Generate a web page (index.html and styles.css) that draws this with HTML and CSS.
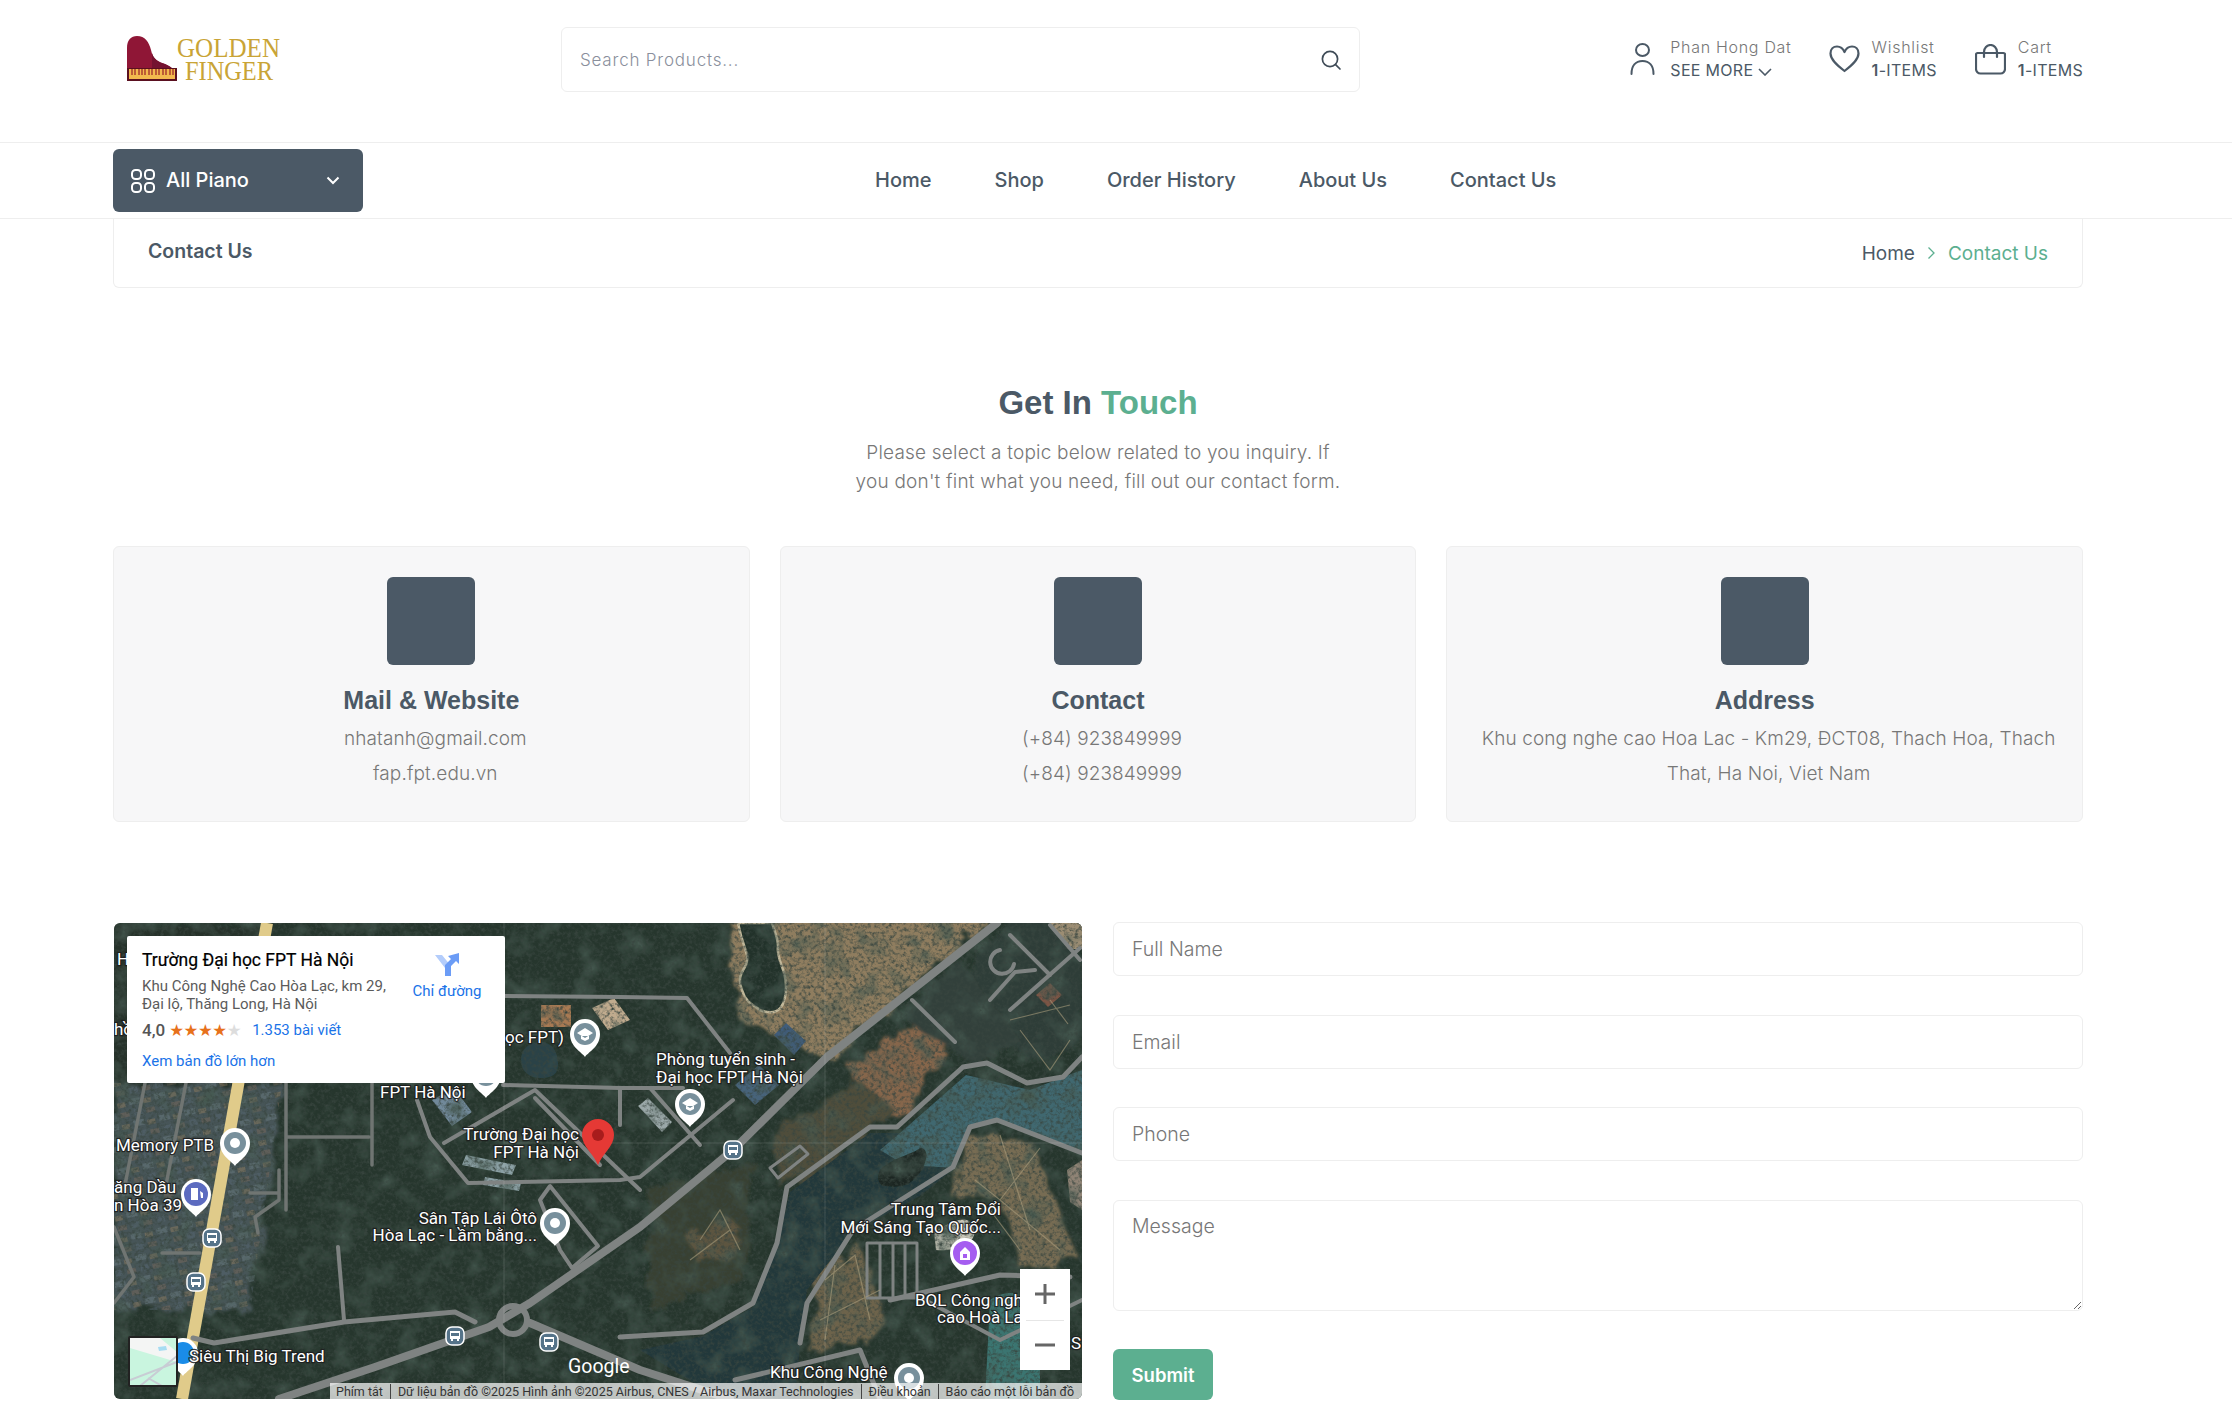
FILE: index.html
```html
<!DOCTYPE html>
<html>
  <head>
    <title>Contact Us</title>
    <link rel="stylesheet" href="styles.css">
  </head>
  <body>
    <header class="top-header">
      <div class="wrap top-row">
        <a class="logo" href="#">
          <svg width="190" height="58" viewBox="0 -8 190 58">
            <path d="M0 45V12C0 4 4 0 10 0c8 0 12 6 14 14 2 10 8 12 14 14 7 3 12 7 12 17z" fill="#8f1636"/>
            <path d="M25 17c2 7 7 9 13 11 7 3 12 7 12 17H25z" fill="#741230"/>
            <rect x="0" y="32" width="50" height="13" fill="#5a1020"/>
            <rect x="2" y="33" width="46" height="10" fill="#f3b94e"/>
            <path d="M5 33v6M8 33v6M12 33v6M15 33v6M18 33v6M22 33v6M25 33v6M29 33v6M32 33v6M36 33v6M39 33v6M43 33v6M46 33v6" stroke="#a5352c" stroke-width="1.4"/>
            <rect x="0" y="43" width="50" height="2" fill="#5a1020"/>
            <text class="logo-text" x="50" y="21" textLength="103" lengthAdjust="spacingAndGlyphs">GOLDEN</text>
            <text class="logo-text" x="58" y="44" textLength="88" lengthAdjust="spacingAndGlyphs">FINGER</text>
          </svg>
        </a>
        <form class="search-box">
          <input type="text" placeholder="Search Products...">
          <svg width="22" height="22" viewBox="0 0 22 22" fill="none" stroke="#3f4b57" stroke-width="1.7">
            <circle cx="10" cy="10" r="7.6"/>
            <path d="M15.6 15.6l4.4 4.4" stroke-linecap="round"/>
          </svg>
        </form>
        <div class="actions">
          <a class="action action-user" href="#">
            <svg width="25" height="32" viewBox="0 0 25 32" fill="none" stroke="#4b5966" stroke-width="2">
              <ellipse cx="12.5" cy="7" rx="6.500" ry="6"/>
              <path d="M1.500 31c0-8 4-13 11-13s11 5 11 13" stroke-linecap="round"/>
            </svg>
            <span class="action-text">
              <span class="action-label">Phan Hong Dat</span>
              <span class="action-value">SEE MORE
                <svg width="14" height="8" viewBox="0 0 14 8" fill="none" stroke="#4b5966" stroke-width="1.6"><path d="M1 1l6 6 6-6"/></svg>
              </span>
            </span>
          </a>
          <a class="action action-wish" href="#">
            <svg width="31" height="28" viewBox="0 0 31 28" fill="none" stroke="#4b5966" stroke-width="2.2">
              <path d="M15.500 26C9 21 1.500 15 1.500 8.500 1.500 4 4.500 1.500 8 1.500c3.500 0 6 2 7.500 5.500C17 3.500 19.500 1.500 23 1.500c3.500 0 6.500 2.500 6.500 7C29.500 15 22 21 15.500 26z" stroke-linejoin="round"/>
            </svg>
            <span class="action-text">
              <span class="action-label">Wishlist</span>
              <span class="action-value"><b>1</b>-ITEMS</span>
            </span>
          </a>
          <a class="action action-cart" href="#">
            <svg width="31" height="31" viewBox="0 0 31 31" fill="none" stroke="#4b5966" stroke-width="2.200">
              <path d="M2.500 9h26a1.500 1.500 0 0 1 1.500 1.500V25a4.500 4.500 0 0 1-4.500 4.500h-20A4.500 4.500 0 0 1 1 25V10.500A1.500 1.500 0 0 1 2.500 9z"/>
              <path d="M9 13V8c0-4 3-7 6.500-7S22 4 22 8v5" stroke-linecap="round"/>
            </svg>
            <span class="action-text">
              <span class="action-label">Cart</span>
              <span class="action-value"><b>1</b>-ITEMS</span>
            </span>
          </a>
        </div>
      </div>
    </header>

    <nav class="nav-bar">
      <div class="wrap nav-row">
        <button type="button" class="category-btn">
          <svg width="24" height="24" viewBox="0 0 24 24" fill="none" stroke="#fff" stroke-width="2">
            <rect x="1" y="1" width="9" height="9" rx="3.500"/>
            <rect x="14" y="1" width="9" height="9" rx="3.500"/>
            <rect x="1" y="14" width="9" height="9" rx="3.500"/>
            <rect x="14" y="14" width="9" height="9" rx="3.500"/>
          </svg>
          <span class="category-name">All Piano</span>
          <svg class="category-caret" width="14" height="9" viewBox="0 0 14 9" fill="none" stroke="#fff" stroke-width="2"><path d="M1.500 1.500L7 7l5.500-5.500"/></svg>
        </button>
        <ul class="nav-links">
          <li><a href="#">Home</a></li>
          <li><a href="#">Shop</a></li>
          <li><a href="#">Order History</a></li>
          <li><a href="#">About Us</a></li>
          <li><a href="#">Contact Us</a></li>
        </ul>
      </div>
    </nav>

    <main class="wrap">
      <div class="breadcrumb">
        <h2>Contact Us</h2>
        <div class="crumbs">
          <a href="#">Home</a>
          <svg width="9" height="14" viewBox="0 0 9 14" fill="none" stroke="#5caf90" stroke-width="1.300"><path d="M1.500 1.500L7 7l-5.500 5.500"/></svg>
          <span>Contact Us</span>
        </div>
      </div>

      <section class="intro">
        <h1>Get In <span>Touch</span></h1>
        <p>Please select a topic below related to you inquiry. If<br>you don't fint what you need, fill out our contact form.</p>
      </section>

      <section class="cards">
        <div class="card">
          <div class="card-icon"></div>
          <h3>Mail &amp; Website</h3>
          <p>nhatanh@gmail.com</p>
          <p>fap.fpt.edu.vn</p>
        </div>
        <div class="card">
          <div class="card-icon"></div>
          <h3>Contact</h3>
          <p>(+84) 923849999</p>
          <p>(+84) 923849999</p>
        </div>
        <div class="card">
          <div class="card-icon"></div>
          <h3>Address</h3>
          <p>Khu cong nghe cao Hoa Lac - Km29, ĐCT08, Thach Hoa, Thach That, Ha Noi, Viet Nam</p>
        </div>
      </section>

      <section class="contact-row">
        <div class="map">
          <svg class="map-canvas" width="968" height="476" viewBox="114 923 968 476">
            <defs>
              <filter id="grain" x="0" y="0" width="100%" height="100%">
                <feTurbulence type="fractalNoise" baseFrequency="0.28" numOctaves="3" seed="7"/>
                <feColorMatrix values="0 0 0 0 0.04  0 0 0 0 0.06  0 0 0 0 0.05  2.2 0 0 0 -0.95"/>
              </filter>
              <filter id="blotch" x="0" y="0" width="100%" height="100%">
                <feTurbulence type="fractalNoise" baseFrequency="0.045" numOctaves="4" seed="21"/>
                <feColorMatrix values="0 0 0 0 0.06  0 0 0 0 0.10  0 0 0 0 0.08  2.4 0 0 0 -1.15"/>
              </filter>
              <filter id="rough" x="-5%" y="-5%" width="110%" height="110%">
                <feTurbulence type="fractalNoise" baseFrequency="0.05" numOctaves="3" seed="4" result="n"/>
                <feDisplacementMap in="SourceGraphic" in2="n" scale="22"/>
                <feGaussianBlur stdDeviation="1.6"/>
              </filter>
              <filter id="soft"><feGaussianBlur stdDeviation="0.5"/></filter>
              <pattern id="houses" width="26" height="22" patternUnits="userSpaceOnUse" patternTransform="rotate(-12)">
                <rect x="1" y="2" width="11" height="6" fill="#6a7a80"/>
                <rect x="15" y="4" width="8" height="5" fill="#8d7a5e"/>
                <rect x="4" y="13" width="8" height="6" fill="#556570"/>
                <rect x="16" y="14" width="9" height="5" fill="#77685a"/>
              </pattern>
              <g id="pin">
                <path d="M0 23C-3 18-15 13-15 0a15 15 0 0 1 30 0C15 13 3 18 0 23z" fill="#fff"/>
              </g>
              <g id="bus">
                <rect x="-9" y="-9" width="18" height="18" rx="6" fill="#557389" stroke="#fff" stroke-width="1.500"/>
                <path d="M-5-5h10v8h-10z" fill="#fff"/>
                <path d="M-4-3h8v3h-8z" fill="#557389"/>
                <path d="M-4 3h2v2h-2zM2 3h2v2h-2z" fill="#fff"/>
              </g>
            </defs>

            <rect x="114" y="923" width="968" height="476" fill="#26362d"/>

            <!-- ground colours -->
            <g filter="url(#rough)">
              <path d="M114 1083H282L250 1310H114z" fill="#465458"/>
              <path d="M630 915H990L830 1060 740 1020 733 965 730 915z" fill="#8f7d5e"/>
              <path d="M850 1068L913 1023 953 1043 897 1117 867 1107z" fill="#86664c"/>
              <path d="M770 1130L860 1080 895 1110 830 1165 780 1190z" fill="#4f4d3b"/>
              <path d="M970 1133L1033 1143 1077 1257 1020 1270 1000 1193 953 1200z" fill="#776c52"/>
              <path d="M817 1270L860 1243 890 1327 812 1357z" fill="#6d644c"/>
              <path d="M650 1190L755 1160 745 1280 650 1310z" fill="#384132"/>
              <path d="M690 1240c20-20 40-30 50-10 6 20-30 40-46 30z" fill="#5d5540"/>
              <path d="M1082 915H1010L950 990 1030 1060 1082 1040z" fill="#2f3c38"/>
              <path d="M900 1015L960 960 1020 1040 975 1065z" fill="#33403a"/>
              <path d="M114 925H260V1083H114z" fill="#25332c"/>
            </g>
            <path d="M114 1083H282L250 1310H114z" fill="url(#houses)" opacity=".5"/>

            <!-- water -->
            <g filter="url(#soft)">
              <path d="M966 1075L1030 1090 1082 1070V1150L997 1122 970 1128 955 1168 920 1196 853 1232 807 1290 800 1345 795 1399H720L640 1350 703 1336 753 1307 777 1247 790 1192 870 1133 900 1133z" fill="#24373a"/>
              <path d="M966 1075L1030 1090 1082 1070V1150L997 1122 970 1128 955 1168 905 1165 880 1150 900 1133z" fill="#3f686f"/>
              <path d="M880 1170c15-14 30-14 40-22 12 0 5 22-5 30-10 12-24 8-32 8-6-4-6-10-3-16z" fill="#1a2822"/>
              <path d="M738 923c6 30 12 30 8 42-6 10-8 14-4 25 4 14 14 16 18 20 20 8 26-6 26-24 0-18-10-26-8-40 0-8-4-16-6-23z" fill="#22322a" stroke="#c2b89a" stroke-width="2.500"/>
              <path d="M990 1300c10-8 30-10 30-2l20 40v61H985z" fill="#3b7471"/>
              <path d="M521 1060c0-14 12-18 20-18s16 6 17 20-8 16-18 16-19-6-19-18z" fill="#2a4346"/>
              <path d="M432 1100l22-12 18 24-20 14z" fill="#71899a"/>
              <path d="M774 1035l12-12 20 18-12 14z" fill="#3f5c7a"/>
              <path d="M735 1085l24-20 20 20-24 20z" fill="#47637a"/>

              <!-- buildings and fields -->
              <path d="M541 1005h30v22h-30z" fill="#a87a52"/>
              <path d="M592 1008l22-10 16 22-22 10z" fill="#c0ab8e"/>
              <path d="M466 1155l50 10-4 10-50-10z" fill="#8ba0a4"/>
              <path d="M485 1177l36 6-2 8-36-6z" fill="#8ba0a4"/>
              <path d="M648 1098l24 24-10 10-24-26z" fill="#9aa7a8"/>
              <path d="M1050 923h32v26h-14z" fill="#9c8d73"/>
              <path d="M1036 995l14-12 12 12-14 12z" fill="#7c5545"/>
              <path d="M934 1232c20-12 36-20 40-2 4 14-22 22-38 20z" fill="#c9c6b8"/>
              <path d="M1067 1170l15-10v50l-12-8z" fill="#8f8374"/>
            </g>

            <rect x="114" y="923" width="968" height="476" filter="url(#blotch)"/>
            <rect x="114" y="923" width="968" height="476" filter="url(#grain)"/>

            <!-- yellow road -->
            <path d="M267 923L182 1399" stroke="#e0cb8a" stroke-width="12" fill="none" filter="url(#soft)"/>

            <!-- grey roads -->
            <g fill="none" stroke="#7f8382" stroke-width="4" stroke-linejoin="round" stroke-linecap="round" filter="url(#soft)">
              <path d="M997 923L827 1057 733 1150 640 1227 530 1303 489 1327 375 1367 279 1399" stroke-width="8"/>
              <circle cx="513" cy="1320" r="14" stroke-width="6"/>
              <path d="M530 1323L640 1370 730 1399" stroke-width="8"/>
              <path d="M475 1322L455 1312 344 1322 214 1343 193 1338" stroke-width="5"/>
              <path d="M338 1247L344 1320"/>
              <path d="M620 1337L703 1332 753 1303 777 1243 787 1187 870 1127 897 1127 963 1067 987 1063 1027 1083 1063 1077 1082 1057" stroke-width="5"/>
              <path d="M800 1343L807 1303 853 1230 953 1167 970 1127 997 1120 1082 1153" stroke-width="5"/>
              <path d="M503 996L620 997 687 998 730 1053"/>
              <path d="M503 1085L620 1088 683 1088"/>
              <path d="M417 1100L430 1137 468 1183 620 1180 640 1177 733 1100"/>
              <path d="M444 1143L535 1090 640 1190"/>
              <path d="M535 1098L600 1165"/>
              <path d="M620 1088V1125M650 1088L700 1145"/>
              <path d="M912 1000L955 1042"/>
              <path d="M990 1000l25-28 20-2M1000 950a12 12 0 1 0 14 14M1010 935l40 40M1050 925l30 35M1010 1010l70-62"/>
              <path d="M867 1243h50v55h-50zM880 1243v55M893 1243v55M905 1243v55" stroke-width="3"/>
              <path d="M890 1300L1000 1275 1070 1277" stroke-width="5"/>
              <path d="M925 1300L1000 1340 1082 1300"/>
              <path d="M735 1380L860 1350 880 1399" stroke-width="5"/>
              <path d="M770 1168l30-22 8 8-30 24z" stroke-width="3"/>
              <path d="M286 1083V1210M288 1137H369M372 1083V1165M145 1083L124 1190M186 1083L165 1190M279 1170V1200L255 1217 258 1233M250 1193H279M114 1227L134 1277 114 1303M162 1253H200" stroke-width="3.500" stroke="#6f7472"/>
              <path d="M540 1200l20 50 12 18 26-22-48-60z"/>
            </g>

            <!-- field tracks -->
            <g fill="none" stroke="#a99c7c" stroke-width="1.200" opacity=".6">
              <path d="M1000 1135L1030 1230M1040 1148L1000 1200 975 1180M1000 1200L1060 1250M990 1210L1020 1250"/>
              <path d="M825 1280L855 1255 870 1320M820 1320L880 1290M835 1265L825 1340"/>
              <path d="M1020 1030l30 40 20-30M1010 1020l60-15M1050 1000l18 24"/>
              <path d="M700 1240l20-30 20 40M690 1260l40-30"/>
            </g>

            <!-- tile seams -->
            <path d="M504 923V1399M825 923V1399M504 1143H1082" stroke="#fff" stroke-width="1" opacity=".12"/>

            <!-- pins -->
            <g class="pins">
              <use href="#pin" x="235" y="1143"/><circle cx="235" cy="1143" r="11" fill="#78909c"/><circle cx="235" cy="1143" r="5" fill="#fff"/>
              <use href="#pin" x="585" y="1034"/><circle cx="585" cy="1034" r="11" fill="#78909c"/><path d="M577 1033l8-5 8 5-8 5zM581 1036v3l4 2 4-2v-3" fill="#fff"/>
              <use href="#pin" x="486" y="1075"/><circle cx="486" cy="1075" r="11" fill="#78909c"/>
              <use href="#pin" x="196" y="1194"/><circle cx="196" cy="1194" r="12" fill="#5c6bc0"/><path d="M191 1188h7v12h-7zM200 1191l3 2v5h-2" fill="#fff"/>
              <use href="#pin" x="555" y="1223"/><circle cx="555" cy="1223" r="11" fill="#78909c"/><circle cx="555" cy="1223" r="5" fill="#fff"/>
              <use href="#pin" x="690" y="1104"/><circle cx="690" cy="1104" r="11" fill="#78909c"/><path d="M682 1103l8-5 8 5-8 5zM686 1106v3l4 2 4-2v-3" fill="#fff"/>
              <use href="#pin" x="965" y="1253"/><circle cx="965" cy="1253" r="12" fill="#a55df0"/><path d="M960 1260v-8l5-5 5 5v8z" fill="#fff"/><rect x="963" y="1254" width="4" height="4" fill="#a55df0"/>
              <use href="#pin" x="909" y="1378"/><circle cx="909" cy="1378" r="11" fill="#78909c"/><circle cx="909" cy="1378" r="5" fill="#fff"/>
              <use href="#pin" x="183" y="1353"/><circle cx="183" cy="1353" r="11" fill="#1a8ce8"/>
              <use href="#bus" x="212" y="1238"/>
              <use href="#bus" x="196" y="1282"/>
              <use href="#bus" x="455" y="1336"/>
              <use href="#bus" x="549" y="1342"/>
              <use href="#bus" x="733" y="1150"/>
              <path d="M598 1165C593 1153 582 1146 582 1135a16 16 0 0 1 32 0c0 11-11 18-16 30z" fill="#e53935"/>
              <circle cx="598" cy="1135" r="6" fill="#a81c1c"/>
            </g>

            <!-- labels -->
            <g class="map-labels">
              <text x="117" y="965">H</text>
              <text x="114" y="1035">hồ</text>
              <text x="505" y="1043">ọc FPT)</text>
              <text x="380" y="1098">FPT Hà Nội</text>
              <text x="116" y="1151">Memory PTB</text>
              <text x="114" y="1193">ăng Dầu</text>
              <text x="114" y="1211">n Hòa 39</text>
              <text x="189" y="1362">Siêu Thị Big Trend</text>
              <text x="579" y="1140" text-anchor="end">Trường Đại học</text>
              <text x="579" y="1158" text-anchor="end">FPT Hà Nội</text>
              <text x="537" y="1224" text-anchor="end">Sân Tập Lái Ôtô</text>
              <text x="537" y="1241" text-anchor="end">Hòa Lạc - Lầm bằng...</text>
              <text x="656" y="1065">Phòng tuyển sinh -</text>
              <text x="656" y="1083">Đại học FPT Hà Nội</text>
              <text x="1001" y="1215" text-anchor="end">Trung Tâm Đổi</text>
              <text x="1001" y="1233" text-anchor="end">Mới Sáng Tạo Quốc...</text>
              <text x="915" y="1306">BQL Công ngh</text>
              <text x="937" y="1323">cao Hoà La</text>
              <text x="1071" y="1349">S</text>
              <text x="770" y="1378">Khu Công Nghệ</text>
            </g>
            <text class="map-google" x="568" y="1373">Google</text>
          </svg>

          <div class="map-card">
            <div class="map-card-info">
              <div class="place-name">Trường Đại học FPT Hà Nội</div>
              <div class="place-addr">Khu Công Nghệ Cao Hòa Lạc, km 29,<br>Đại lộ, Thăng Long, Hà Nội</div>
              <div class="place-rating">
                <span class="rating-num">4,0</span>
                <span class="stars">★★★★<i>★</i></span>
                <a href="#">1.353 bài viết</a>
              </div>
              <a class="place-big" href="#">Xem bản đồ lớn hơn</a>
            </div>
            <a class="place-dir" href="#">
              <svg width="24" height="24" viewBox="0 0 24 24">
                <path d="M0 3h7l9 11v10H10V16z" fill="#b4cdfb"/>
                <path d="M10 24V13l6-6-3-3 11-3v11l-3-3-5 5v10z" fill="#6b9cf6"/>
              </svg>
              <span>Chỉ đường</span>
            </a>
          </div>

          <div class="map-zoom">
            <button type="button"><svg width="22" height="22" viewBox="0 0 22 22"><path d="M11 1v20M1 11h20" stroke="#666" stroke-width="3"/></svg></button>
            <button type="button"><svg width="22" height="22" viewBox="0 0 22 22"><path d="M1 11h20" stroke="#666" stroke-width="3"/></svg></button>
          </div>

          <div class="map-thumb">
            <svg width="47" height="48" viewBox="0 0 47 48">
              <rect width="47" height="48" fill="#c9f5df"/>
              <path d="M0 0h30l17 14v10L0 10z" fill="#f4f5f4"/>
              <path d="M28 9l8-1 1 4-8 1z" fill="#a6dcf2"/>
              <path d="M10 48L47 18M0 42l47-18M18 40l14 8" stroke="#c8ccd4" stroke-width="2" fill="none"/>
            </svg>
          </div>

          <div class="map-attrib">
            <span>Phím tắt</span>
            <span>Dữ liệu bản đồ ©2025 Hình ảnh ©2025 Airbus, CNES / Airbus, Maxar Technologies</span>
            <span>Điều khoản</span>
            <span>Báo cáo một lỗi bản đồ</span>
          </div>
        </div>

        <form class="contact-form">
          <input type="text" placeholder="Full Name">
          <input type="text" placeholder="Email">
          <input type="text" placeholder="Phone">
          <textarea placeholder="Message"></textarea>
          <button type="button" class="submit-btn">Submit</button>
        </form>
      </section>
    </main>
  </body>
</html>
```

FILE: styles.css
```css
* {
  box-sizing: border-box;
}

body {
  margin: 0;
  background-color: #fff;
  color: #4b5966;
  font-family: Inter, "Noto Sans", sans-serif;
  overflow: hidden;
}

a {
  color: inherit;
  text-decoration: none;
}

.wrap {
  width: 1970px;
  margin-left: 113px;
}

/* top header */
.top-header {
  height: 143px;
  border-bottom: 1px solid #eee;
}

.top-row {
  display: flex;
  align-items: flex-start;
}

.logo {
  width: 448px;
  padding: 28px 0 0 14px;
  display: block;
}

.logo svg {
  display: block;
}

.logo-text {
  font-family: "Liberation Serif", serif;
  font-size: 28px;
  fill: #c9a436;
}

.search-box {
  width: 799px;
  height: 65px;
  margin-top: 27px;
  padding: 0 17px 0 18px;
  display: flex;
  align-items: center;
  border: 1px solid #eee;
  border-radius: 6px;
}

.search-box input {
  flex: 1;
  border: none;
  outline: none;
  padding: 0;
  font-family: inherit;
  font-size: 17px;
  font-weight: 300;
  letter-spacing: 0.8px;
}

.search-box input::placeholder {
  color: #8a8f9c;
}

.actions {
  margin-left: auto;
  margin-top: 36px;
  display: flex;
}

.action {
  display: flex;
  align-items: center;
  gap: 15px;
}

.action-user {
  margin-right: 37px;
}

.action-wish {
  margin-right: 38px;
  gap: 12px;
}

.action-cart {
  gap: 12px;
}

.action-text {
  display: flex;
  flex-direction: column;
  font-size: 16px;
  line-height: 23px;
  white-space: nowrap;
}

.action-label {
  color: #777;
  font-weight: 300;
  letter-spacing: 0.7px;
}

.action-value {
  color: #4b5966;
  letter-spacing: 0.3px;
}

.action-value b {
  font-weight: 600;
}

/* nav */
.nav-bar {
  height: 76px;
  border-bottom: 1px solid #eee;
}

.nav-row {
  display: flex;
  position: relative;
  padding-top: 6px;
}

.category-btn {
  width: 250px;
  height: 63px;
  padding: 0 23px 0 18px;
  display: flex;
  align-items: center;
  gap: 11px;
  background-color: #4b5966;
  color: #fff;
  border: none;
  border-radius: 6px;
  font-family: inherit;
  font-size: 20px;
  font-weight: 500;
}

.category-name {
  padding-bottom: 2px;
}

.category-caret {
  margin-left: auto;
}

.nav-links {
  list-style: none;
  margin: 0 0 0 512px;
  padding: 0 0 2px;
  height: 63px;
  display: flex;
  align-items: center;
  gap: 63px;
  font-size: 20px;
  font-weight: 500;
}

/* breadcrumb */
.breadcrumb {
  height: 69px;
  padding: 0 34px;
  display: flex;
  justify-content: space-between;
  align-items: center;
  border: 1px solid #eee;
  border-top: none;
  border-radius: 0 0 6px 6px;
}

.breadcrumb h2 {
  margin: 0 0 4px;
  font-size: 19.5px;
  font-weight: 600;
}

.crumbs {
  display: flex;
  align-items: center;
  gap: 12px;
  font-size: 19px;
}

.crumbs span {
  color: #5caf90;
}

/* intro */
.intro {
  padding-top: 95px;
  text-align: center;
}

.intro h1 {
  margin: 0;
  font-family: "Liberation Sans", Arial, sans-serif;
  font-size: 33px;
  line-height: 40px;
  font-weight: 700;
}

.intro h1 span {
  color: #5caf90;
}

.intro p {
  margin: 15px 0 0;
  color: #777;
  font-size: 19px;
  font-weight: 300;
  letter-spacing: 0.2px;
  line-height: 29px;
}

/* cards */
.cards {
  margin-top: 50px;
  display: grid;
  grid-template-columns: 1fr 1fr 1fr;
  gap: 30px;
}

.card {
  height: 276px;
  padding: 30px 20px 0;
  background-color: #f7f7f8;
  border: 1px solid #eee;
  border-radius: 6px;
  text-align: center;
}

.card-icon {
  width: 88px;
  height: 88px;
  margin: 0 auto;
  background-color: #4b5966;
  border-radius: 6px;
}

.card h3 {
  margin: 17px 0 3px;
  font-family: "Liberation Sans", Arial, sans-serif;
  font-size: 25px;
  line-height: 36px;
  font-weight: 700;
}

.card p {
  margin: 0;
  padding-left: 8px;
  color: #777;
  font-size: 19px;
  font-weight: 300;
  letter-spacing: 0.1px;
  line-height: 35px;
}

/* map and form */
.contact-row {
  margin-top: 101px;
  display: grid;
  grid-template-columns: 969px 970px;
  gap: 31px;
}

.map {
  position: relative;
  width: 968px;
  height: 476px;
  margin-left: 1px;
  border-radius: 6px;
  overflow: hidden;
  font-family: Roboto, sans-serif;
}

.map-canvas {
  display: block;
}

.map-labels text {
  font-family: Roboto, sans-serif;
  font-size: 17px;
  fill: #fff;
  stroke: #1c1c1c;
  stroke-width: 2.5px;
  stroke-opacity: 0.85;
  paint-order: stroke;
}

.map-google {
  font-family: Roboto, sans-serif;
  font-size: 19.5px;
  font-weight: 400;
  fill: #fff;
}

.map-card {
  position: absolute;
  left: 13px;
  top: 13px;
  width: 378px;
  height: 147px;
  padding: 13px 15px;
  display: flex;
  justify-content: space-between;
  background-color: #fff;
  border-radius: 2px;
}

.place-name {
  color: #000;
  font-size: 17.5px;
  font-weight: 400;
  -webkit-text-stroke: 0.2px #000;
  line-height: 22px;
}

.place-addr {
  margin-top: 6px;
  color: #5b5b5b;
  font-size: 15px;
  line-height: 18px;
}

.place-rating {
  margin-top: 6px;
  display: flex;
  align-items: center;
  height: 22px;
  color: #1a73e8;
  font-size: 15px;
}

.rating-num {
  color: #555;
  font-size: 17px;
  font-weight: 500;
}

.stars {
  margin: 0 11px 0 4px;
  color: #e7711b;
  font-family: "DejaVu Sans", sans-serif;
  font-size: 16.5px;
  letter-spacing: -0.4px;
}

.stars i {
  color: #ddd;
  font-style: normal;
}

.place-big {
  display: block;
  margin-top: 11px;
  color: #1a73e8;
  font-size: 15px;
}

.place-dir {
  width: 78px;
  padding-top: 3px;
  margin-right: 4px;
  display: flex;
  flex-direction: column;
  align-items: center;
  gap: 6px;
  color: #1a73e8;
  font-size: 15px;
  white-space: nowrap;
}

.map-zoom {
  position: absolute;
  left: 906px;
  top: 346px;
  width: 50px;
  height: 101px;
  background-color: #fff;
  display: flex;
  flex-direction: column;
}

.map-zoom button {
  flex: 1;
  border: none;
  background: none;
  padding: 0;
  display: flex;
  align-items: center;
  justify-content: center;
}

.map-zoom button + button {
  position: relative;
}

.map-zoom button + button::before {
  content: "";
  position: absolute;
  left: 6px;
  right: 6px;
  top: 0;
  height: 1px;
  background-color: #e6e6e6;
}

.map-thumb {
  position: absolute;
  left: 14px;
  top: 413px;
  width: 50px;
  height: 51px;
  border: 2px solid #222;
  border-radius: 2px;
  overflow: hidden;
}

.map-thumb svg {
  display: block;
}

.map-attrib {
  position: absolute;
  left: 216px;
  right: 0;
  bottom: 0;
  height: 16px;
  padding-left: 6px;
  display: flex;
  align-items: center;
  gap: 15px;
  background-color: rgba(255, 255, 255, 0.7);
  color: #333;
  font-size: 12.5px;
  white-space: nowrap;
}

.map-attrib span + span {
  position: relative;
}

.map-attrib span + span::before {
  content: "";
  position: absolute;
  left: -8px;
  top: 0;
  bottom: 0;
  width: 1px;
  background-color: #444;
}

.contact-form {
  display: flex;
  flex-direction: column;
  align-items: flex-start;
  gap: 38.5px;
  margin-top: -1px;
}

.contact-form input,
.contact-form textarea {
  width: 100%;
  height: 54px;
  padding: 0 18px;
  border: 1px solid #eee;
  border-radius: 6px;
  font-family: inherit;
  font-size: 19.5px;
  font-weight: 300;
  outline: none;
}

.contact-form textarea {
  height: 111px;
  padding-top: 13px;
}

.contact-form input::placeholder,
.contact-form textarea::placeholder {
  color: #777;
}

.submit-btn {
  width: 100px;
  height: 51px;
  padding: 0;
  background-color: #5caf90;
  color: #fff;
  border: none;
  border-radius: 6px;
  font-family: inherit;
  font-size: 18.5px;
  font-weight: 600;
}
```
